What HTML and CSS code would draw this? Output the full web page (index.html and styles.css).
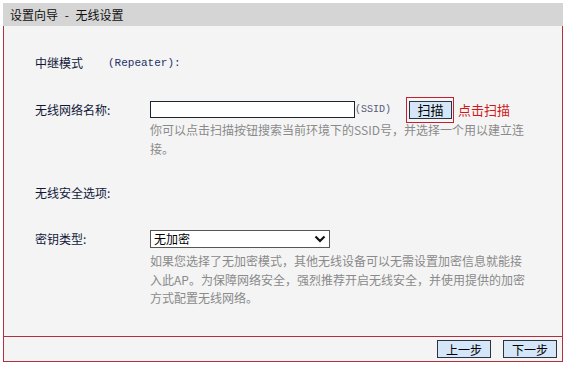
FILE: index.html
```html
<!DOCTYPE html>
<html lang="zh-CN">
<head>
<meta charset="utf-8">
<link rel="stylesheet" href="styles.css">
</head>
<body>
<div class="wrap">
  <div class="title">设置向导 - 无线设置</div>
  <div class="panel">
    <div class="content">
      <div class="row r1"><span class="lab lab-mode">中继模式</span><span class="mono navy">(Repeater):</span></div>
      <div class="row r2">
        <span class="lab">无线网络名称:</span>
        <input class="ssid" type="text">
        <span class="mono gray ssidtag">(SSID)</span>
        <span class="scanbox"><button class="btn scan">扫描</button></span>
        <span class="red">点击扫描</span>
      </div>
      <div class="hint h1">你可以点击扫描按钮搜索当前环境下的SSID号，并选择一个用以建立连<br>接。</div>
      <div class="row r3"><span class="lab">无线安全选项:</span></div>
      <div class="row r4">
        <span class="lab">密钥类型:</span>
        <span class="selwrap">
          <select class="sel"><option>无加密</option></select>
          <svg class="chev" width="12" height="8" viewBox="0 0 12 8"><path d="M1.5 1.5 L6 6 L10.5 1.5" fill="none" stroke="#111" stroke-width="2.2"/></svg>
        </span>
      </div>
      <div class="hint h2">如果您选择了无加密模式，其他无线设备可以无需设置加密信息就能接<br>入此AP。为保障网络安全，强烈推荐开启无线安全，并使用提供的加密<br>方式配置无线网络。</div>
    </div>
    <div class="footer">
      <button class="btn step">上一步</button>
      <button class="btn step">下一步</button>
    </div>
  </div>
</div>
</body>
</html>
```

FILE: styles.css
```css
html, body {
  margin: 0;
  padding: 0;
  background: #ffffff;
}
body {
  font-family: "Noto Sans CJK SC", "Noto Sans", sans-serif;
  font-size: 12px;
  color: #1a1a3a;
}
.wrap {
  margin: 3px 0 0 3px;
  width: 560px;
}
.title {
  background: #d5d5d5;
  height: 23px;
  line-height: 23px;
  padding-left: 7px;
  font-size: 12px;
  word-spacing: 4px;
  color: #111;
}
.panel {
  background: #f4f4f4;
  border-left: 1px solid #b03040;
  border-right: 1px solid #b03040;
  border-bottom: 1px solid #b03040;
}
.content {
  height: 310px;
  padding-left: 31px;
  overflow: hidden;
}
.row {
  display: flex;
  align-items: center;
  height: 18px;
  line-height: 18px;
}
.lab {
  width: 115px;
  flex: none;
  color: #10183a;
}
.lab-mode {
  width: 73px;
}
.mono {
  font-family: "Liberation Mono", "DejaVu Sans Mono", monospace;
  font-size: 11px;
}
.ssidtag {
  font-size: 10px;
}
.navy { color: #23306a; }
.gray { color: #555a78; }
.r1 { margin-top: 28px; }
.r2 { margin-top: 29px; height: 17px; }
.ssid {
  width: 205px;
  height: 17px;
  box-sizing: border-box;
  border: 1px solid #1c2430;
  background: #fff;
  margin: 0;
  padding: 0;
}
.scanbox {
  margin: 0 0 0 15px;
  border: 1px solid #c02030;
  padding: 3px 1px 3px 2px;
  display: flex;
}
.btn {
  font-family: "Noto Sans CJK SC", sans-serif;
  font-size: 12px;
  background: #d5e6f8;
  border: 1px solid #2a3440;
  color: #000;
  margin: 0;
  padding: 0;
  line-height: 15px;
}
.scan {
  width: 43px;
  height: 18px;
  font-size: 13px;
}
.red {
  color: #d01818;
  font-size: 13px;
  margin-left: 4px;
}
.hint {
  color: #8a8a8a;
  margin-left: 115px;
  line-height: 19px;
}
.h1 { margin-top: 2px; }
.r3 { margin-top: 26px; }
.r4 { margin-top: 28px; }
.selwrap {
  position: relative;
  display: flex;
}
.sel {
  appearance: none;
  -webkit-appearance: none;
  width: 180px;
  height: 18px;
  box-sizing: border-box;
  border: 1px solid #555;
  background: #fff;
  font-family: "Noto Sans CJK SC", sans-serif;
  font-size: 12px;
  color: #000;
  padding: 0 0 0 3px;
  margin: 0;
  border-radius: 0;
  line-height: 16px;
}
.chev {
  position: absolute;
  right: 4px;
  top: 5px;
}
.h2 {
  margin-top: 4px;
  line-height: 18.5px;
}
.footer {
  border-top: 1px solid #b03040;
  height: 24px;
  display: flex;
  justify-content: flex-end;
  align-items: center;
  gap: 12px;
  padding-right: 5px;
}
.step {
  width: 54px;
  height: 18px;
}
```
